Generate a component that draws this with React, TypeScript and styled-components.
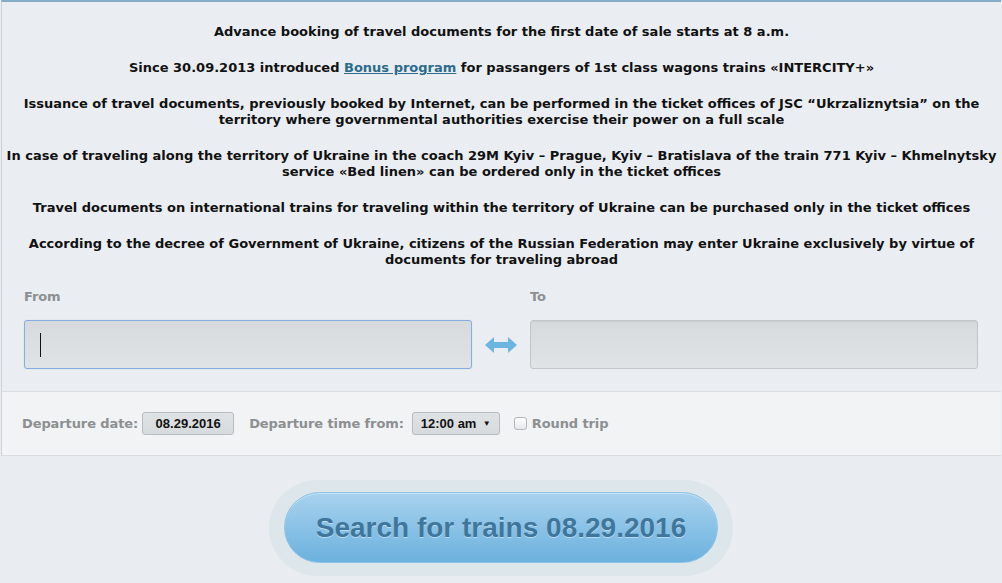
import React from "react";
import styled, { createGlobalStyle } from "styled-components";

const GlobalStyle = createGlobalStyle`
  html, body {
    margin: 0;
    padding: 0;
    background: #e9edf1;
  }
  * {
    box-sizing: border-box;
  }
`;

const Panel = styled.div`
  margin: 0 1px;
  border-top: 2px solid #86abc6;
  border-left: 1px solid #cdd2d7;
  background: #eaeef2;
`;

const Notices = styled.div`
  padding: 22px 0 0;
  text-align: center;
  font-family: "DejaVu Sans", Verdana, sans-serif;
  font-weight: bold;
  font-size: 13px;
  line-height: 16px;
  color: #111;
`;

const Notice = styled.p`
  margin: 0 0 20px;
`;

const Link = styled.a`
  color: #2c6b8c;
  text-decoration: underline;
`;

const Route = styled.div`
  display: grid;
  grid-template-columns: 448px 58px 448px;
  grid-template-rows: 16px 49px;
  row-gap: 15px;
  padding: 1px 0 22px 22px;
`;

const Label = styled.div`
  font-family: "DejaVu Sans", Verdana, sans-serif;
  font-weight: bold;
  font-size: 13px;
  line-height: 16px;
  letter-spacing: -0.1px;
  color: #8d8f91;
`;

const Field = styled.div<{ $focused?: boolean }>`
  display: flex;
  align-items: center;
  padding-left: 15px;
  border: 1px solid ${(p) => (p.$focused ? "#86ace0" : "#c3c6c9")};
  border-radius: 3px;
  background: linear-gradient(#d6dadd, #e0e3e6);
  box-shadow: ${(p) => (p.$focused ? "0 0 1px #9dbce6" : "inset 0 1px 1px rgba(0,0,0,0.06)")};
`;

const Caret = styled.span`
  width: 1px;
  height: 24px;
  background: #111;
`;

const Swap = styled.div`
  display: flex;
  align-items: center;
  justify-content: center;
`;

const Options = styled.div`
  display: flex;
  align-items: center;
  height: 65px;
  padding: 0 0 0 20px;
  border-top: 1px solid #dadee2;
  border-bottom: 1px solid #d8dce0;
  background: #f1f3f5;
`;

const OptLabel = styled.span<{ $gap?: number }>`
  font-family: "DejaVu Sans", Verdana, sans-serif;
  font-weight: bold;
  font-size: 13px;
  letter-spacing: -0.1px;
  color: #8d8f91;
  margin-right: ${(p) => p.$gap ?? 0}px;
`;

const Control = styled.div<{ $width: number; $gap: number; $center?: boolean }>`
  display: flex;
  align-items: center;
  justify-content: ${(p) => (p.$center ? "center" : "space-between")};
  width: ${(p) => p.$width}px;
  height: 23px;
  padding: 0 8px;
  margin-right: ${(p) => p.$gap}px;
  border: 1px solid #b9bcbf;
  border-radius: 3px;
  background: linear-gradient(#e0e3e5, #d7dadd);
  font-family: "Liberation Sans", Arial, sans-serif;
  font-weight: bold;
  font-size: 13px;
  color: #111;
`;

const Arrow = styled.span`
  font-size: 8px;
  line-height: 1;
`;

const Check = styled.span`
  width: 13px;
  height: 13px;
  margin-right: 5px;
  border: 1px solid #b4b7ba;
  border-radius: 3px;
  background: linear-gradient(#fdfdfd, #e6e8ea);
`;

const ButtonArea = styled.div`
  display: flex;
  justify-content: center;
  padding-top: 24px;
`;

const Halo = styled.div`
  padding: 12px 15px 13px;
  border-radius: 48px;
  background: #dde6ea;
`;

const SearchButton = styled.button`
  width: 434px;
  height: 71px;
  padding: 0;
  border: 1px solid #8fc3e6;
  border-radius: 36px;
  background: linear-gradient(#a8d2ee, #6cb1de);
  box-shadow: inset 0 1px 0 rgba(255, 255, 255, 0.35);
  font-family: "Liberation Sans", Arial, sans-serif;
  font-weight: bold;
  font-size: 28px;
  color: #3f769b;
  text-shadow: 0 1px 0 rgba(255, 255, 255, 0.45);
  cursor: pointer;
`;

const notices: React.ReactNode[] = [
  "Advance booking of travel documents for the first date of sale starts at 8 a.m.",
  <>
    Since 30.09.2013 introduced <Link href="#">Bonus program</Link> for passangers of 1st class wagons trains «INTERCITY+»
  </>,
  <>
    Issuance of travel documents, previously booked by Internet, can be performed in the ticket offices of JSC “Ukrzaliznytsia” on the
    <br />
    territory where governmental authorities exercise their power on a full scale
  </>,
  <>
    In case of traveling along the territory of Ukraine in the coach 29M Kyiv – Prague, Kyiv – Bratislava of the train 771 Kyiv – Khmelnytsky
    <br />
    service «Bed linen» can be ordered only in the ticket offices
  </>,
  "Travel documents on international trains for traveling within the territory of Ukraine can be purchased only in the ticket offices",
  <>
    According to the decree of Government of Ukraine, citizens of the Russian Federation may enter Ukraine exclusively by virtue of
    <br />
    documents for traveling abroad
  </>,
];

const SwapIcon = () => (
  <svg width="32" height="16" viewBox="0 0 32 16">
    <polygon points="0,8 9,0 9,5 23,5 23,0 32,8 23,16 23,11 9,11 9,16" fill="#6db5e1" />
  </svg>
);

export default function App() {
  const date = "08.29.2016";
  return (
    <>
      <GlobalStyle />
      <Panel>
        <Notices>
          {notices.map((n, i) => (
            <Notice key={i}>{n}</Notice>
          ))}
        </Notices>
        <Route>
          <Label>From</Label>
          <span />
          <Label>To</Label>
          <Field $focused>
            <Caret />
          </Field>
          <Swap>
            <SwapIcon />
          </Swap>
          <Field />
        </Route>
        <Options>
          <OptLabel $gap={4}>Departure date:</OptLabel>
          <Control $width={92} $gap={15} $center>
            <span>{date}</span>
          </Control>
          <OptLabel $gap={8}>Departure time from:</OptLabel>
          <Control $width={88} $gap={14}>
            <span>12:00 am</span>
            <Arrow>▼</Arrow>
          </Control>
          <Check />
          <OptLabel>Round trip</OptLabel>
        </Options>
      </Panel>
      <ButtonArea>
        <Halo>
          <SearchButton>Search for trains {date}</SearchButton>
        </Halo>
      </ButtonArea>
    </>
  );
}
